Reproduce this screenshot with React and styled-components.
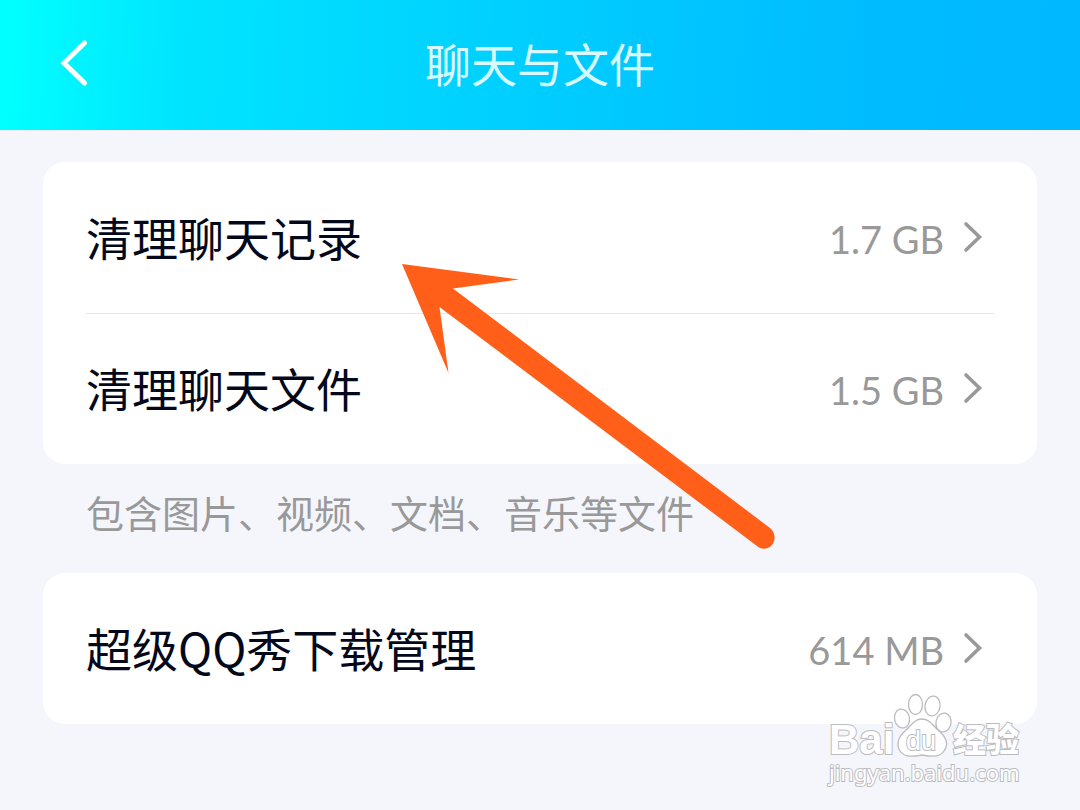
import React from "react";
import styled, { createGlobalStyle } from "styled-components";

const GlobalStyle = createGlobalStyle`
  body {
    margin: 0;
    background-color: #f4f6fc;
    font-family: "Noto Sans CJK SC", sans-serif;
  }
`;

const Page = styled.div`
  position: relative;
  min-height: 100vh;
  overflow: hidden;
`;

const Header = styled.header`
  display: grid;
  grid-template-columns: 100px 1fr 100px;
  align-items: center;
  height: 130px;
  background: linear-gradient(93deg, #00ffff 1%, #00e4ff 17%, #00d0ff 46%, #00c3ff 67%, #00bbff 83%, #00b8ff 100%);
`;

const BackButton = styled.button`
  display: flex;
  justify-content: flex-end;
  padding: 0 12px 4px 0;
  border: none;
  background: none;
  cursor: pointer;
`;

const Title = styled.h1`
  margin: 0;
  padding-bottom: 6px;
  font-size: 46px;
  font-weight: 400;
  line-height: 64px;
  text-align: center;
  color: #d8faff;
`;

const Main = styled.main`
  padding: 32px 43px;
`;

const Card = styled.section`
  padding: 0 43px;
  border-radius: 22px;
  background-color: white;
`;

const Row = styled.button`
  display: flex;
  align-items: center;
  width: 100%;
  height: 151px;
  padding: 0 0 2px;
  border: none;
  background: none;
  font-family: inherit;
  text-align: left;
  cursor: pointer;

  & + & {
    border-top: 1px solid #e6e7ea;
  }
`;

const Label = styled.span`
  flex: 1;
  padding-bottom: 2px;
  font-size: 46px;
  line-height: 64px;
  color: #03081a;
`;

const Size = styled.span`
  padding-top: 4px;
  font-family: Lato, sans-serif;
  font-size: 38px;
  line-height: 48px;
  color: #999999;
`;

const Note = styled.p`
  margin: 0;
  padding: 20px 43px 33px;
  font-size: 38px;
  line-height: 56px;
  color: #999999;
`;

const Arrow = styled.svg`
  position: absolute;
  top: 260px;
  left: 398px;
  pointer-events: none;
`;

const Watermark = styled.div`
  position: absolute;
  right: 54px;
  bottom: 22px;
  display: flex;
  flex-direction: column;
  width: 200px;
  pointer-events: none;

  text {
    fill: white;
    stroke: #bcbcc0;
    stroke-width: 2px;
    paint-order: stroke;
  }
`;

function Chevron() {
  return (
    <svg width="50" height="36" viewBox="0 0 50 36" fill="none" aria-hidden="true">
      <path d="M22 5L35.500 18L22 31" stroke="#999999" strokeWidth="3.600" strokeLinecap="round" />
    </svg>
  );
}

function StorageRow({ label, size }) {
  return (
    <Row type="button">
      <Label>{label}</Label>
      <Size>{size}</Size>
      <Chevron />
    </Row>
  );
}

function App() {
  return (
    <Page>
      <GlobalStyle />
      <Header>
        <BackButton type="button" aria-label="返回">
          <svg width="28" height="48" viewBox="0 0 28 48" fill="none">
            <path d="M24.500 4L4 24L24.500 44" stroke="white" strokeWidth="5" strokeLinecap="round" />
          </svg>
        </BackButton>
        <Title>聊天与文件</Title>
      </Header>

      <Main>
        <Card>
          <StorageRow label="清理聊天记录" size="1.7 GB" />
          <StorageRow label="清理聊天文件" size="1.5 GB" />
        </Card>
        <Note>包含图片、视频、文档、音乐等文件</Note>
        <Card>
          <StorageRow label="超级QQ秀下载管理" size="614 MB" />
        </Card>
      </Main>

      {/* pointer to the first row */}
      <Arrow width="380" height="292" viewBox="398 260 380 292" aria-hidden="true">
        <path
          d="M402 264L519 279.500L453 288.500L770 528C776 533 776 541 771 546C767 549.500 761 549.500 757 546L439.500 307L448.500 373Z"
          fill="#ff5f18"
        />
      </Arrow>

      <Watermark>
        <svg width="200" height="96" viewBox="826 692 200 96">
          <text x="829" y="754" fontFamily="Liberation Sans, sans-serif" fontSize="42" fontWeight="700">Bai</text>
          <g fill="white" stroke="#bcbcc0" strokeWidth="1.300">
            <ellipse cx="902" cy="718.500" rx="7.500" ry="9.500" transform="rotate(-12 902 718.500)" />
            <ellipse cx="915.500" cy="704.500" rx="7" ry="10" />
            <ellipse cx="932.500" cy="706" rx="7.500" ry="10" transform="rotate(10 932.500 706)" />
            <ellipse cx="943.500" cy="722.500" rx="7.500" ry="9.500" transform="rotate(12 943.500 722.500)" />
            <path d="M922 719C914 719 911 726 905 731C898 737 896 745 900 751C904 757 911 757 922 755C933 757 940 757 944 751C949 744 946 737 939 731C933 726 930 719 922 719Z" />
          </g>
          <text x="906" y="750" fontFamily="Liberation Sans, sans-serif" fontSize="27">du</text>
          <text x="953" y="752" fontFamily="Noto Sans CJK SC, sans-serif" fontSize="33" fontWeight="900">经验</text>
          <text x="829" y="781" fontFamily="Noto Sans, sans-serif" fontSize="22">jingyan.baidu.com</text>
        </svg>
      </Watermark>
    </Page>
  );
}

export default App;
